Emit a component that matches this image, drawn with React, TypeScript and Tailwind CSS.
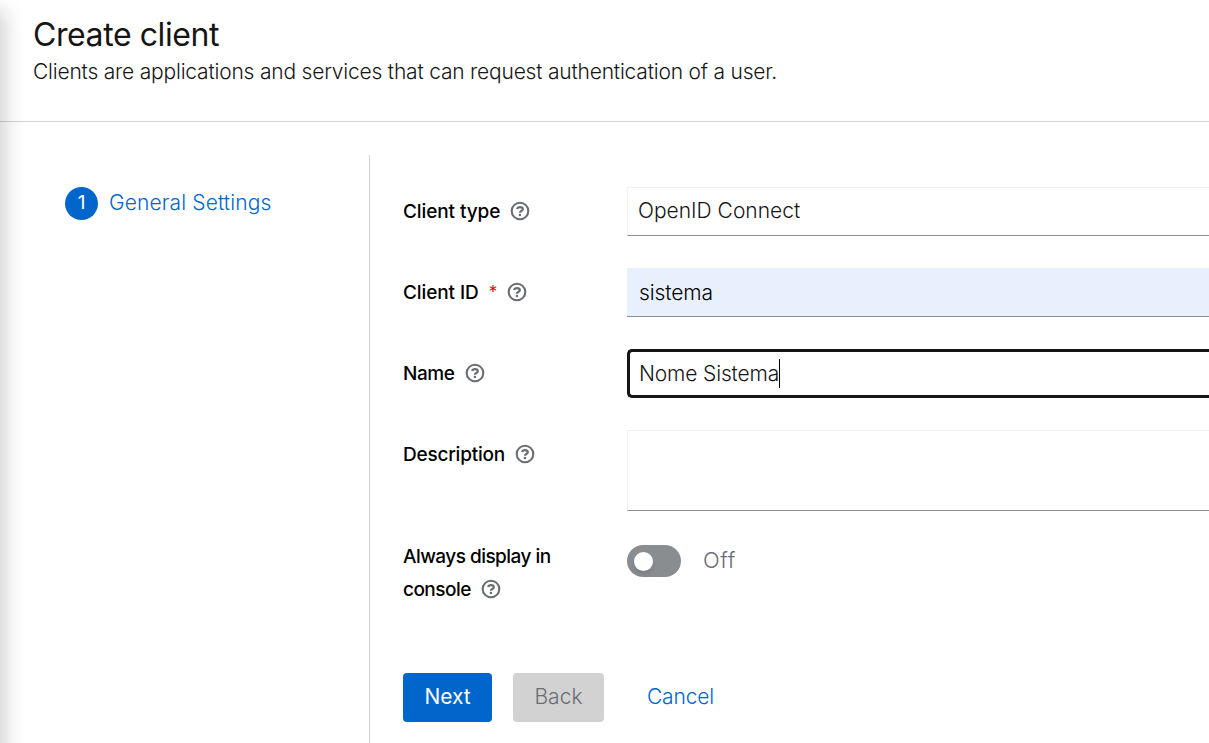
import type { ReactNode } from "react";

function HelpIcon({ className = "" }: { className?: string }) {
  return (
    <svg viewBox="0 0 20 20" fill="none" className={`-mt-[2px] size-5 shrink-0 text-[#6a6e73] ${className}`}>
      <circle cx="10" cy="10" r="8.3" stroke="currentColor" strokeWidth="2.1" />
      <path
        d="M7.1 8C7.5 6.7 8.5 6.1 9.9 6.1c1.7 0 2.9.8 2.9 2.2 0 1.8-2.9 1.7-2.9 3.5"
        stroke="currentColor"
        strokeWidth="2.2"
      />
      <circle cx="9.9" cy="14" r="1.3" fill="currentColor" />
    </svg>
  );
}

function Row({ label, className, children }: { label: ReactNode; className: string; children: ReactNode }) {
  return (
    <div className={`flex ${className}`}>
      <div className="w-[224px] shrink-0 text-[19px] font-medium leading-[33px] text-black">{label}</div>
      {children}
    </div>
  );
}

export default function App() {
  return (
    <div className="relative flex h-[743px] w-full flex-col overflow-hidden bg-white font-['Inter',sans-serif] text-[21px] font-light text-[#151515]">
      <header className="h-[122px] shrink-0 border-b border-[#d2d2d2] pl-[33px] pt-[14px]">
        <h1 className="text-[32px] font-normal leading-[42px] tracking-[-0.42px]">Create client</h1>
        <p className="leading-[32px] tracking-[-0.205px]">Clients are applications and services that can request authentication of a user.</p>
      </header>
      <main className="flex flex-1 pt-[33px]">
        <nav className="w-[370px] shrink-0 border-r border-[#d2d2d2] pl-[65px] pt-8">
          <a className="flex items-center gap-[11px] text-[#0066cc]">
            <span className="flex size-[33px] items-center justify-center rounded-full bg-[#0066cc] text-[19px] font-normal text-white">1</span>
            <span className="-mt-[2px] leading-[33px] tracking-[0.13px]">General Settings</span>
          </a>
        </nav>
        <section className="flex-1 pl-[33px] pt-8">
          <Row className="h-[81px]" label={<div className="flex items-center gap-[10px] pt-2"><span className="tracking-[-0.1px]">Client type</span><HelpIcon /></div>}>
            <div className="h-[49px] flex-1 border border-r-0 border-[#f0f0f0] border-b-[#8a8d90] pl-[10px] leading-[46px]">OpenID Connect</div>
          </Row>
          <Row className="h-[81px]" label={<div className="flex items-center pt-2"><span className="tracking-[-0.1px]">Client ID</span><span className="ml-[10px] text-[17px] font-normal text-[#c9190b]">*</span><HelpIcon className="ml-[10px]" /></div>}>
            <div className="h-[49px] flex-1 border-b border-[#8a8d90] bg-[#e8f0fe] pl-3 leading-[50px] tracking-[-0.1px] text-black">sistema</div>
          </Row>
          <Row className="h-[81px]" label={<div className="flex items-center gap-[10px] pt-2"><span className="tracking-[-0.4px]">Name</span><HelpIcon /></div>}>
            <div className="flex h-[49px] flex-1 items-center rounded-l-[5px] border-[3px] border-r-0 border-[#151515] pl-[9px]">
              <span className="tracking-[-0.15px]">Nome Sistema</span><span className="h-[29px] w-px bg-black" />
            </div>
          </Row>
          <Row className="h-[113px]" label={<div className="flex items-center gap-[10px] pt-2"><span className="tracking-[-0.22px]">Description</span><HelpIcon /></div>}>
            <div className="h-[81px] flex-1 border border-r-0 border-[#f0f0f0] border-b-[#8a8d90]" />
          </Row>
          <Row className="h-[130px]" label={<div className="-mt-[3px] tracking-[-0.54px]"><div>Always display in</div><div className="flex items-center gap-[10px]"><span>console</span><HelpIcon /></div></div>}>
            <div className="flex h-8 items-center gap-[22px] pt-[3px]">
              <div className="mt-[1px] flex h-8 w-[54px] items-center rounded-full bg-[#8a8d90] pl-[7px]">
                <div className="size-[19px] rounded-full bg-white shadow-md" />
              </div>
              <span className="text-[22px] tracking-[0.5px] text-[#6a6e73]">Off</span>
            </div>
          </Row>
          <div className="flex">
            <button className="h-[49px] w-[89px] rounded-[4px] bg-[#0066cc] pb-[2px] font-normal tracking-[-0.1px] text-white">Next</button>
            <button className="ml-[21px] h-[49px] w-[91px] rounded-[4px] bg-[#d2d2d2] pb-[2px] text-[#6a6e73]">Back</button>
            <button className="ml-[21px] h-[49px] w-[111px] pb-[2px] tracking-[-0.15px] text-[#0066cc]">Cancel</button>
          </div>
        </section>
      </main>
      <div className="absolute -left-[20px] top-[14px] bottom-[-30px] w-[20px] shadow-[0_0_22px_3px_rgba(3,3,3,0.22)]" />
    </div>
  );
}
